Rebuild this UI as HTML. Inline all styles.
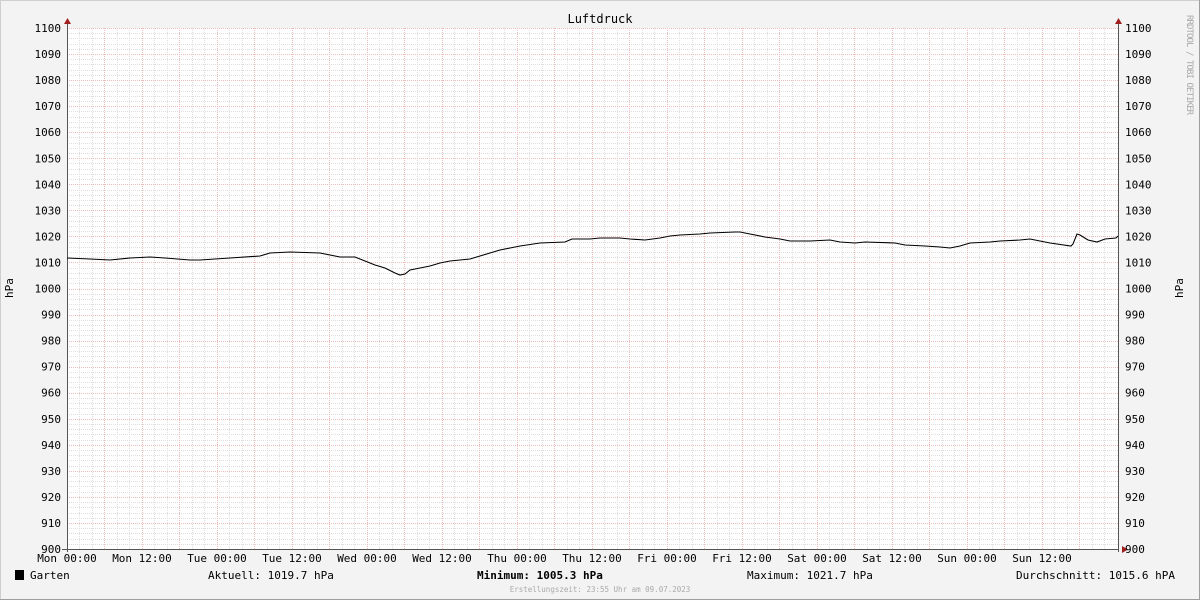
<!DOCTYPE html>
<html><head><meta charset="utf-8"><style>
html,body{margin:0;padding:0;background:#f3f3f3}
svg{display:block}
text{font-family:"DejaVu Sans Mono","Liberation Mono",monospace;}
</style></head><body>
<svg width="1200" height="600" viewBox="0 0 1200 600" xmlns="http://www.w3.org/2000/svg" shape-rendering="crispEdges">
<rect x="0" y="0" width="1200" height="600" fill="#f3f3f3"/>
<path d="M0.5 599 V0.5 H1199" stroke="#cfcfcf" fill="none"/>
<path d="M1199.5 0 V599.5 H0" stroke="#9e9e9e" fill="none"/>
<rect x="67" y="28" width="1051" height="521" fill="#fff"/>
<g stroke-width="1" fill="none">
<path id="hminor" stroke="#dedede" stroke-dasharray="1,1" d=""/>
<path id="vminor" stroke="#dedede" stroke-dasharray="1,1" d=""/>
<path id="vmajor" stroke="#efbcbc" stroke-dasharray="1,1" d=""/>
<path id="hmajor" stroke="#efbcbc" stroke-dasharray="1,1" d=""/>
</g>
<script>
(function(){var mi="",ma="",hm="",hM="";
for(var k=1;k<28;k++){var x=Math.floor(67+37.5*k)+0.5;ma+="M"+x+" 28V549";}
for(var k=1;k<84;k++){if(k%3==0)continue;var x=Math.floor(67+12.5*k)+0.5;mi+="M"+x+" 28V549";}
for(var v=902;v<1100;v+=2){var y=Math.round(549-(v-900)*2.605)+0.5;if(v%10==0)hM+="M67 "+y+"H1118";else hm+="M67 "+y+"H1118";}
hM+="M67 28.5H1118";
document.getElementById("vminor").setAttribute("d",mi);document.getElementById("vmajor").setAttribute("d",ma);
document.getElementById("hminor").setAttribute("d",hm);document.getElementById("hmajor").setAttribute("d",hM);})();
</script>
<g stroke="#555" fill="none">
<path d="M67.5 22V552"/><path d="M1118.5 22V552"/><path d="M62 549.5H1118"/>
</g>
<g shape-rendering="auto">
<path d="M64 24L67.5 18L71 24Z" fill="#a02020"/>
<path d="M1115 24L1118.5 18L1122 24Z" fill="#a02020"/>
<path d="M1122 546L1128 549.5L1122 553Z" fill="#a02020"/>
<polyline fill="none" stroke="#000" stroke-width="1.1" points="67,258 90,259 110,260 130,258 150,257 165,258 190,260 200,260 230,258 260,256 270,253 290,252 320,253 340,257 355,257 365,261 375,265 385,268 395,273 400,275 405,274 410,270 420,268 430,266 440,263 450,261 470,259 480,256 490,253 500,250 510,248 520,246 540,243 565,242 572,239 590,239 600,238 620,238 630,239 645,240 660,238 670,236 680,235 700,234 710,233 735,232 740,232 750,234 765,237 780,239 790,241 800,241 810,241 830,240 840,242 855,243 865,242 895,243 905,245 925,246 940,247 950,248 960,246 970,243 990,242 1000,241 1020,240 1030,239 1050,243 1071,246 1073,244 1077,234 1080,235 1088,240 1097,242 1105,239 1116,238 1118,236"/>
</g>
<g font-size="11" fill="#000" shape-rendering="auto">
<text x="600" y="23" text-anchor="middle" font-size="12">Luftdruck</text>
<g text-anchor="end" id="yl"></g>
<g id="yr"></g>
<g text-anchor="middle">
<text x="67" y="562">Mon 00:00</text><text x="142" y="562">Mon 12:00</text>
<text x="217" y="562">Tue 00:00</text><text x="292" y="562">Tue 12:00</text>
<text x="367" y="562">Wed 00:00</text><text x="442" y="562">Wed 12:00</text>
<text x="517" y="562">Thu 00:00</text><text x="592" y="562">Thu 12:00</text>
<text x="667" y="562">Fri 00:00</text><text x="742" y="562">Fri 12:00</text>
<text x="817" y="562">Sat 00:00</text><text x="892" y="562">Sat 12:00</text>
<text x="967" y="562">Sun 00:00</text><text x="1042" y="562">Sun 12:00</text>
</g>
<text transform="translate(13,288) rotate(-90)" text-anchor="middle">hPa</text>
<text transform="translate(1183,288) rotate(-90)" text-anchor="middle">hPa</text>
<rect x="15" y="570" width="9" height="10" fill="#000"/>
<text x="30" y="579">Garten</text>
<text x="208" y="579">Aktuell: 1019.7 hPa</text>
<text x="477" y="579" font-weight="bold">Minimum: 1005.3 hPa</text>
<text x="747" y="579">Maximum: 1021.7 hPa</text>
<text x="1016" y="579">Durchschnitt: 1015.6 hPA</text>
</g>
<text x="600" y="592" text-anchor="middle" font-size="7.5" fill="#aaa">Erstellungszeit: 23:55 Uhr am 09.07.2023</text>
<text transform="translate(1187,15) rotate(90)" font-size="9" fill="#aaa" textLength="100">RRDTOOL / TOBI OETIKER</text>
<script>
(function(){var L=document.getElementById("yl"),R=document.getElementById("yr"),ns="http://www.w3.org/2000/svg";
for(var v=900;v<=1100;v+=10){var y=549-(v-900)*2.605+4;
var t=document.createElementNS(ns,"text");t.setAttribute("x","61");t.setAttribute("y",y);t.textContent=v;L.appendChild(t);
var r=document.createElementNS(ns,"text");r.setAttribute("x","1125");r.setAttribute("y",y);r.textContent=v;R.appendChild(r);}})();
</script>
</svg>
</body></html>
